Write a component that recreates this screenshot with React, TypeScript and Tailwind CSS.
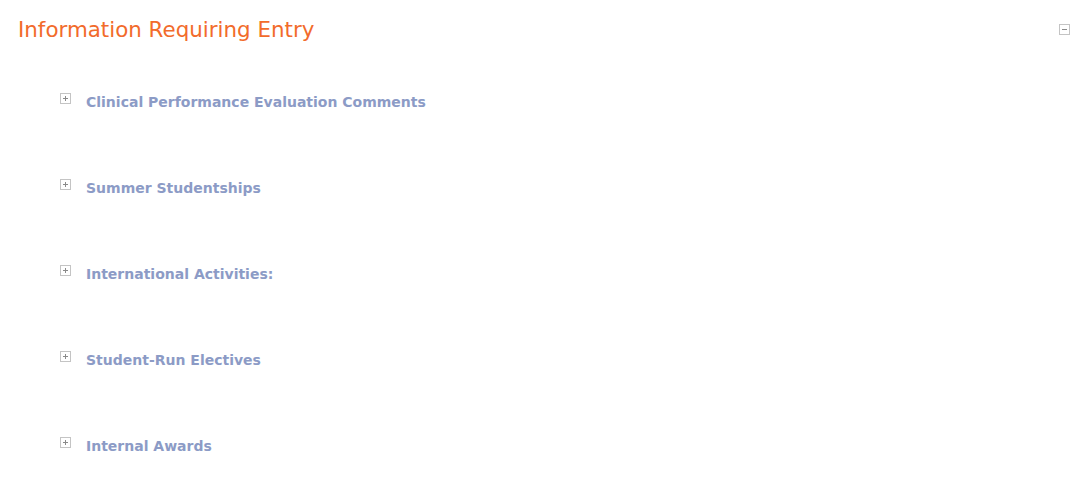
const sections = [
  "Clinical Performance Evaluation Comments",
  "Summer Studentships",
  "International Activities:",
  "Student-Run Electives",
  "Internal Awards",
];

function ToggleBox({ open }: { open?: boolean }) {
  return (
    <svg width="11" height="11" viewBox="0 0 11 11" className="shrink-0">
      <rect x="0.5" y="0.5" width="10" height="10" fill="#fff" stroke="#c4c4c4" />
      <line x1="3" y1="5.5" x2="8" y2="5.5" stroke="#8a8a8a" />
      {!open && <line x1="5.5" y1="3" x2="5.5" y2="8" stroke="#8a8a8a" />}
    </svg>
  );
}

export default function App() {
  return (
    <main className="min-h-screen w-full bg-white font-['DejaVu_Sans',sans-serif]">
      <header className="flex items-start justify-between pl-[18px] pr-[14px] pt-[16px]">
        <h1 className="text-[21.4px] leading-[28px] text-[#f26b2b]">Information Requiring Entry</h1>
        <div className="mt-[8px]">
          <ToggleBox open />
        </div>
      </header>

      <ul className="mt-[48px] flex flex-col gap-[66px] pl-[60px]">
        {sections.map((s) => (
          <li key={s} className="flex items-start gap-[15px]">
            <div className="mt-[1px]">
              <ToggleBox />
            </div>
            <span className="text-[14px] font-bold leading-[20px] text-[#8c9bc6]">{s}</span>
          </li>
        ))}
      </ul>
    </main>
  );
}
